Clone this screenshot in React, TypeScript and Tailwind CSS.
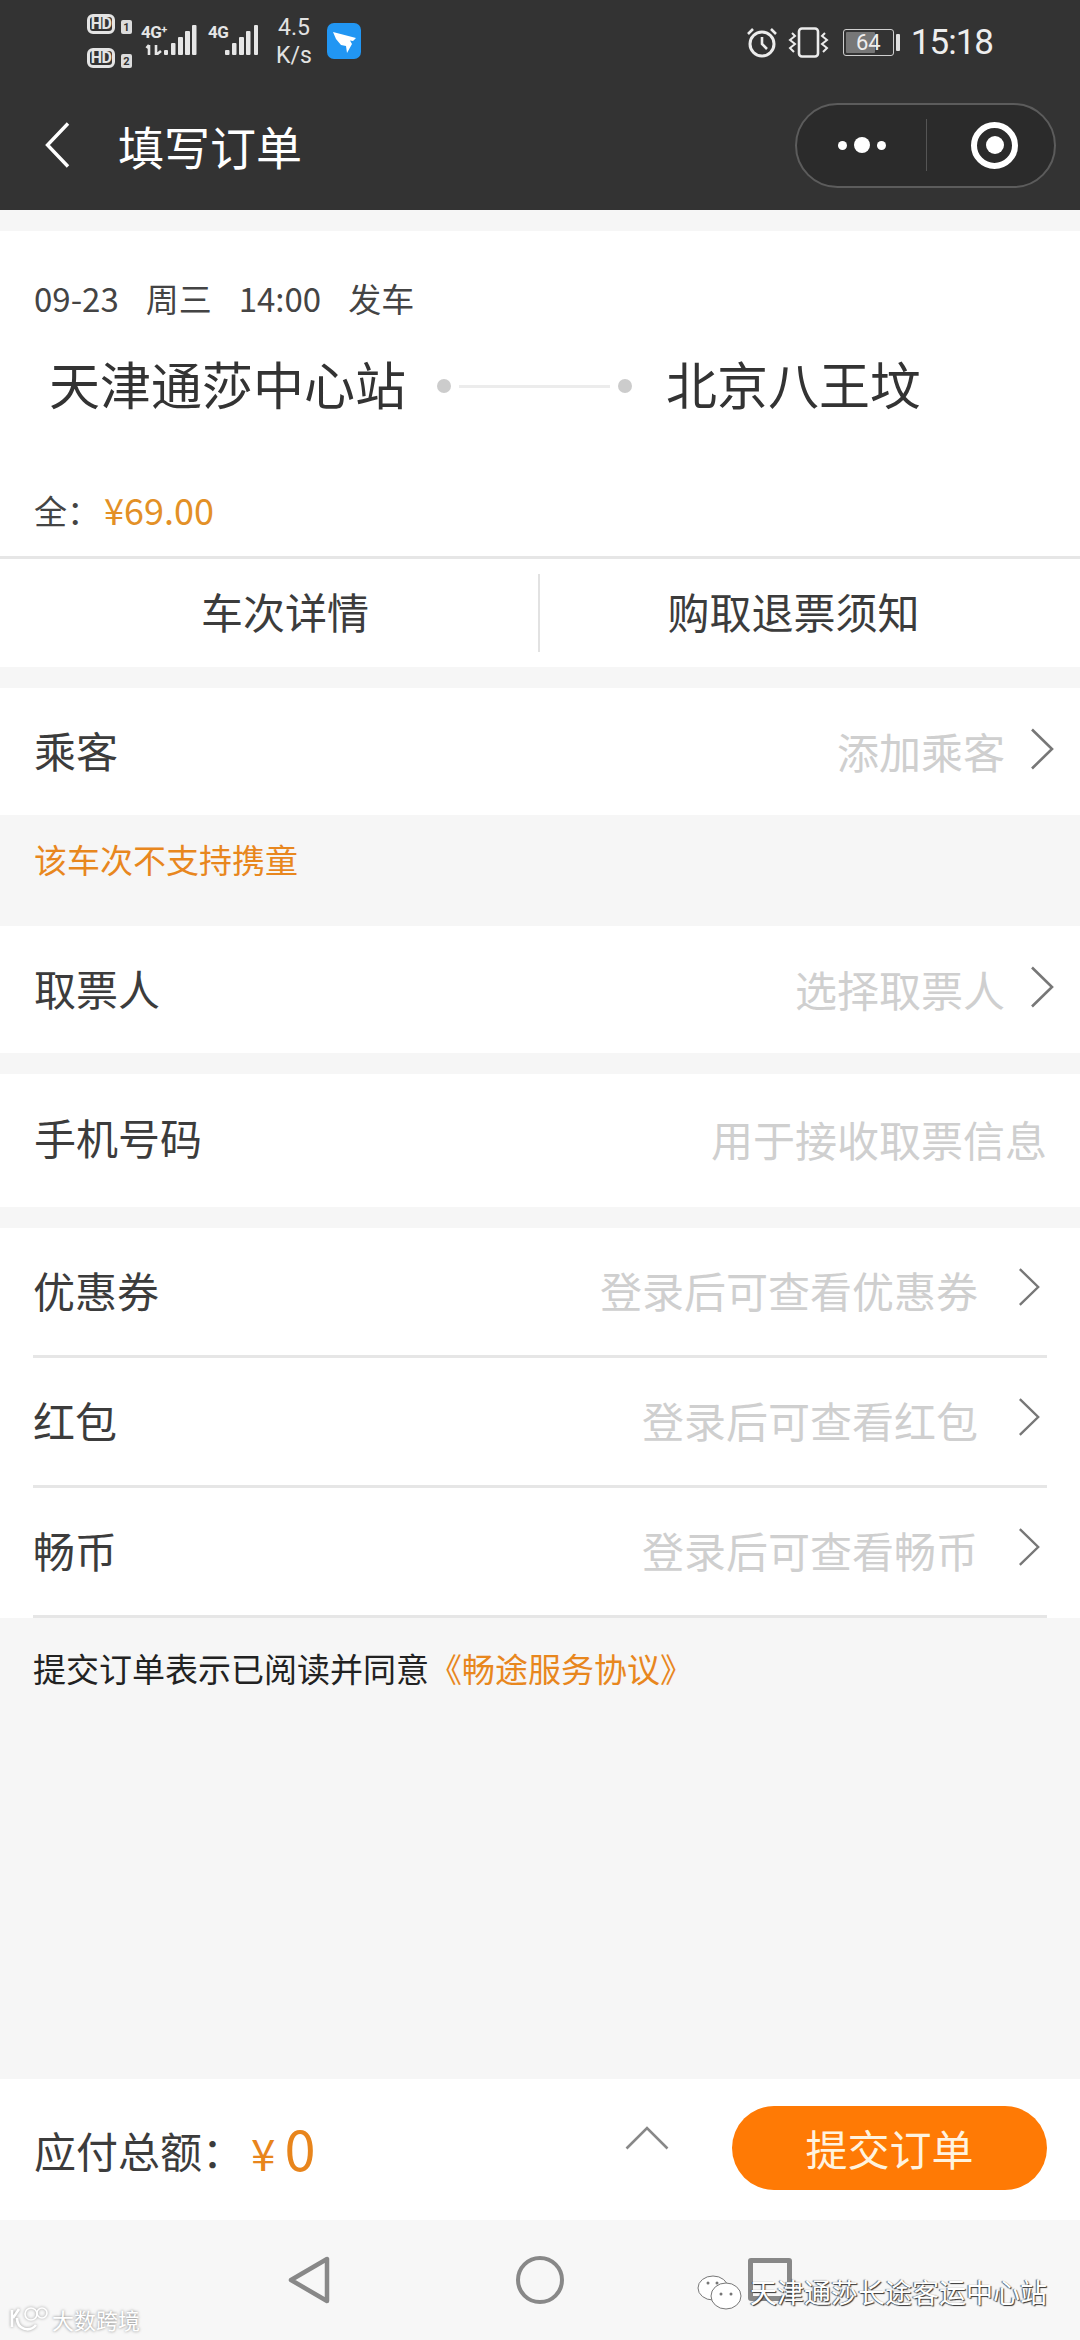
import React from "react";

const cjk = "font-['Noto_Sans_CJK_SC','Noto_Sans',sans-serif]";

function Chevron({ className }: { className?: string }) {
  return (
    <svg className={className} viewBox="0 0 24 42" fill="none">
      <path d="M2 1.5 L22 21 L2 40.5" stroke="#777" strokeWidth="2.6" />
    </svg>
  );
}

function HdBadge({ n }: { n: string }) {
  return (
    <div className="flex items-end gap-[6px]">
      <div className="w-[28px] h-[20px] rounded-[6px] border-[3px] border-[#e4e4e4] flex items-center justify-center font-['Roboto',sans-serif] font-bold text-[16px] tracking-[-0.5px] leading-none text-[#e4e4e4]">
        HD
      </div>
      <div className="w-[11px] h-[14px] rounded-[2px] bg-[#dcdcdc] flex items-center justify-center font-['Roboto',sans-serif] font-bold text-[11px] leading-none text-[#333]">
        {n}
      </div>
    </div>
  );
}

function StatusBar() {
  return (
    <div className="h-[80px] flex items-start text-[#eaeaea]">
      <div className="ml-[87px] mt-[14px] flex flex-col gap-[14px]">
        <HdBadge n="1" />
        <HdBadge n="2" />
      </div>

      {/* signal for both sims */}
      <div className="relative ml-[9px] mt-[25px] w-[117px] h-[30px]">
        <svg className="w-full h-full" viewBox="0 0 117 30" fill="#e6e6e6">
          <path d="M8 20 L8 30 M5.5 23 L8 20" stroke="#e6e6e6" strokeWidth="2.6" fill="none" />
          <path d="M15 20 L15 30 L20 26" stroke="#e6e6e6" strokeWidth="2.6" fill="none" />
          <rect x="23" y="25" width="4" height="5" rx="1" />
          <rect x="30" y="18" width="4.5" height="12" rx="1" />
          <rect x="37" y="12" width="5" height="18" rx="1" />
          <rect x="44" y="6" width="5" height="24" rx="1" />
          <rect x="51" y="0" width="4.5" height="30" rx="1" />
          <rect x="84" y="25" width="4.5" height="5" rx="1" />
          <rect x="91" y="18" width="4.5" height="12" rx="1" />
          <rect x="98" y="12" width="5" height="18" rx="1" />
          <rect x="105" y="6" width="4.5" height="24" rx="1" />
          <rect x="113" y="0" width="4" height="30" rx="1" />
        </svg>
        <span className="absolute left-0 top-[-2px] font-['Roboto',sans-serif] font-bold text-[17px] leading-[18px] text-[#e6e6e6] tracking-[-0.5px]">
          4G<span className="relative top-[-5px] text-[11px] leading-none">+</span>
        </span>
        <span className="absolute left-[67px] top-[-2px] font-['Roboto',sans-serif] font-bold text-[17px] leading-[18px] text-[#e6e6e6] tracking-[-0.5px]">
          4G
        </span>
      </div>

      <div className="ml-[18px] mt-[14px] w-[36px] font-['Roboto',sans-serif] text-[23px] leading-[28px] text-[#e2e2e2] text-center">
        <div>4.5</div>
        <div>K/s</div>
      </div>

      {/* app notification icon */}
      <div className="ml-[15px] mt-[23px] w-[34px] h-[36px] rounded-[7px] bg-[#2196f3] flex items-center justify-center">
        <svg className="w-[28px] h-[28px]" viewBox="0 0 28 28" fill="#fff">
          <path d="M3 5 L26 11 L23 14 L20 13.5 L22 17 L17 26 L16 19 L11 18 L6 12 Z" />
        </svg>
      </div>

      <div className="ml-auto mr-[87px] mt-[25px] flex items-center">
        <svg className="w-[32px] h-[31px]" viewBox="0 0 32 31" fill="none" stroke="#ececec">
          <circle cx="16" cy="17" r="12" strokeWidth="3" />
          <path d="M16 10 L16 17 L21 22" strokeWidth="2.6" />
          <path d="M2 7 L7 2 M30 7 L25 2" strokeWidth="2.6" />
        </svg>
        <svg className="ml-[10px] w-[41px] h-[31px]" viewBox="0 0 41 31" fill="none" stroke="#ececec">
          <rect x="11" y="1.5" width="19" height="28" rx="3" strokeWidth="2.6" />
          <path d="M4 6 L7 9 L2 13 L7 17 L2 21 L6 25" strokeWidth="2" />
          <path d="M37 6 L34 9 L39 13 L34 17 L39 21 L35 25" strokeWidth="2" />
        </svg>
        <div className="ml-[14px] relative w-[51px] h-[27px] rounded-[3px] border border-[#cfcfcf] p-[2px]">
          <div className="h-full w-[64%] bg-[#777] rounded-[1px]" />
          <span className="absolute inset-0 flex items-center justify-center font-['Roboto',sans-serif] text-[22px] leading-none text-[#eee]">
            64
          </span>
        </div>
        <div className="ml-[2px] w-[4px] h-[17px] rounded-[1px] bg-[#e0e0e0]" />
        <div className="ml-[11px] font-['Roboto',sans-serif] text-[35px] leading-none tracking-[-1px] text-[#eeeeee]">
          15:18
        </div>
      </div>
    </div>
  );
}

function NavBar() {
  return (
    <div className="h-[130px] flex items-center pl-[45px] pr-[24px]">
      <svg className="w-[25px] h-[46px]" viewBox="0 0 25 46" fill="none">
        <path d="M23 1.5 L2.5 23 L23 44.5" stroke="#fff" strokeWidth="3.4" />
      </svg>
      <div className={`ml-[48px] text-[46px] leading-[58px] text-white ${cjk}`}>填写订单</div>
      <div className="ml-auto w-[261px] h-[85px] rounded-full border-2 border-[#5c5c5c] bg-[#2b2b2b] flex items-center">
        <div className="w-[129px] flex items-center justify-center gap-[7px]">
          <div className="w-[9px] h-[9px] rounded-full bg-white" />
          <div className="w-[16px] h-[16px] rounded-full bg-white" />
          <div className="w-[9px] h-[9px] rounded-full bg-white" />
        </div>
        <div className="w-px h-[52px] bg-[#555]" />
        <div className="flex-1 flex items-center justify-center pl-[8px]">
          <div className="w-[47px] h-[47px] rounded-full border-[6px] border-white flex items-center justify-center">
            <div className="w-[18px] h-[18px] rounded-full bg-white" />
          </div>
        </div>
      </div>
    </div>
  );
}

function TripCard() {
  return (
    <div className="mt-[21px] bg-white">
      <div className="pt-[45px] pl-[34px] flex gap-[27px] text-[33px] leading-[44px] text-[#444]">
        <span>09-23</span>
        <span>周三</span>
        <span>14:00</span>
        <span>发车</span>
      </div>
      <div className="mt-[36px] pl-[49px] flex items-center h-[60px] text-[51px] leading-[60px] text-[#333]">
        <span className="w-[388px] -translate-y-[3px]">天津通莎中心站</span>
        <div className="w-[14px] h-[14px] rounded-full bg-[#cccccc]" />
        <div className="ml-[8px] w-[151px] h-[3px] bg-[#ececec]" />
        <div className="ml-[8px] w-[14px] h-[14px] rounded-full bg-[#cccccc]" />
        <span className="ml-[34px] -translate-y-[3px]">北京八王坟</span>
      </div>
      <div className="mt-[72px] mb-[24px] pl-[34px] h-[44px] flex items-center text-[33px] leading-[44px] text-[#444]">
        <span>全：</span>
        <span className="ml-[4px] text-[36px] text-[#e39026] -translate-y-[1px]">¥69.00</span>
      </div>
      <div className="h-[3px] bg-[#e6e6e6]" />
      <div className="h-[108px] flex items-center text-[42px] leading-[56px] text-[#3c3c3c]">
        <div className="w-[538px] text-center pl-[32px] -translate-y-[2px]">车次详情</div>
        <div className="w-[2px] h-[78px] bg-[#e2e2e2]" />
        <div className="flex-1 text-center pr-[33px] -translate-y-[2px]">购取退票须知</div>
      </div>
    </div>
  );
}

function LinkRow({ label, hint, height }: { label: string; hint: string; height: string }) {
  return (
    <div className={`bg-white flex items-center pl-[34px] pr-[26px] ${height}`}>
      <span className="text-[42px] leading-[56px] text-[#3c3c3c] -translate-y-[2px]">{label}</span>
      <span className="ml-auto text-[42px] leading-[56px] text-[#cfcfcf] -translate-y-[1px]">{hint}</span>
      <Chevron className="ml-[25px] w-[24px] h-[42px] -translate-y-[3px]" />
    </div>
  );
}

function LoginRow({ label, hint }: { label: string; hint: string }) {
  return (
    <div className="h-[130px] mx-[33px] border-b-[3px] border-[#e6e6e6] flex items-center">
      <span className="text-[42px] leading-[56px] text-[#3c3c3c] -translate-y-[2px]">{label}</span>
      <span className="ml-auto text-[42px] leading-[56px] text-[#cfcfcf] -translate-y-[2px]">{hint}</span>
      <Chevron className="ml-[40px] mr-[7px] w-[22px] h-[42px] -translate-y-[5px]" />
    </div>
  );
}

export default function App() {
  return (
    <div className={`relative w-[1080px] h-[2340px] overflow-hidden flex flex-col bg-[#f6f6f6] ${cjk}`}>
      <div className="h-[210px] bg-[#333333]">
        <StatusBar />
        <NavBar />
      </div>

      <TripCard />

      <div className="mt-[21px]">
        <LinkRow label="乘客" hint="添加乘客" height="h-[127px]" />
      </div>
      <div className="h-[111px] pt-[22px] pl-[34px] text-[33px] leading-[44px] text-[#e8871e]">该车次不支持携童</div>
      <LinkRow label="取票人" hint="选择取票人" height="h-[127px]" />
      <div className="mt-[21px]">
        <div className="h-[133px] bg-white flex items-center pl-[34px] pr-[33px]">
          <span className="text-[42px] leading-[56px] text-[#3c3c3c] -translate-y-[4px]">手机号码</span>
          <span className="ml-auto text-[42px] leading-[56px] text-[#cfcfcf] -translate-y-[2px]">用于接收取票信息</span>
        </div>
      </div>

      <div className="mt-[21px] bg-white">
        <LoginRow label="优惠券" hint="登录后可查看优惠券" />
        <LoginRow label="红包" hint="登录后可查看红包" />
        <LoginRow label="畅币" hint="登录后可查看畅币" />
      </div>

      <div className="mt-[27px] pl-[33px] text-[33px] leading-[46px] text-[#222]">
        提交订单表示已阅读并同意
        <span className="text-[#e8871e]">《畅途服务协议》</span>
      </div>

      <div className="flex-1" />

      {/* pay bar */}
      <div className="h-[141px] bg-white flex items-center pl-[34px] pr-[33px]">
        <span className="text-[42px] leading-[56px] text-[#3c3c3c]">应付总额：</span>
        <span className="ml-[7px] flex items-baseline text-[#e8851c] -translate-y-[3px]">
          <span className="text-[44px] leading-none">¥</span>
          <span className="ml-[9px] text-[56px] leading-none">0</span>
        </span>
        <svg className="ml-auto w-[44px] h-[24px] -translate-y-[12px]" viewBox="0 0 44 24" fill="none">
          <path d="M1.5 22.5 L22 2 L42.5 22.5" stroke="#888" strokeWidth="2.6" />
        </svg>
        <div className="ml-[63px] w-[315px] h-[84px] rounded-full bg-[#ff7a05] flex items-center justify-center text-[42px] leading-[56px] text-[#fff3df] -translate-y-[2px]">
          提交订单
        </div>
      </div>

      {/* android nav keys */}
      <div className="h-[120px] bg-[#f7f7f7] flex items-start pt-[36px] pl-[288px]">
        <svg className="w-[42px] h-[48px]" viewBox="0 0 42 48" fill="none">
          <path d="M3 24 L39 3 L39 45 Z" stroke="#888" strokeWidth="4.5" strokeLinejoin="round" />
        </svg>
        <div className="ml-[186px] w-[48px] h-[48px] rounded-full border-[4.5px] border-[#888]" />
        <div className="ml-[184px] mt-[2px] w-[44px] h-[43px] rounded-[3px] border-[5px] border-[#888]" />
      </div>

      {/* watermarks */}
      <div className="absolute left-[9px] top-[2305px] flex items-center">
        <svg className="w-[40px] h-[28px]" viewBox="0 0 40 28" fill="none" stroke="#fff" strokeWidth="2.6" style={{ filter: "drop-shadow(0 0 1.5px #999)" }}>
          <path d="M3 5 L3 22 M4 13 L10 4 M8 13 C8 24 20 28 27 20" />
          <circle cx="22" cy="9" r="6" strokeWidth="1.6" />
          <circle cx="33" cy="8" r="5" strokeWidth="1.6" />
        </svg>
        <span className="ml-[3px] text-[22px] leading-[28px] text-white [text-shadow:0_0_3px_#777]">大数跨境</span>
      </div>
      <div className="absolute left-[697px] top-[2272px] flex items-center">
        <svg className="w-[46px] h-[37px]" viewBox="0 0 46 37" stroke="#777" strokeWidth="1" fill="#fff">
          <ellipse cx="16" cy="14" rx="15" ry="12" />
          <ellipse cx="29" cy="22" rx="15" ry="13" />
          <circle cx="24" cy="20" r="1.5" fill="#777" stroke="none" />
          <circle cx="34" cy="20" r="1.5" fill="#777" stroke="none" />
          <circle cx="11" cy="9" r="1.5" fill="#777" stroke="none" />
          <circle cx="20" cy="9" r="1.5" fill="#777" stroke="none" />
        </svg>
        <span className="ml-[7px] text-[27px] leading-[40px] text-white [text-shadow:1px_1px_1px_#333,-1px_0_1px_#555]">天津通莎长途客运中心站</span>
      </div>
    </div>
  );
}
